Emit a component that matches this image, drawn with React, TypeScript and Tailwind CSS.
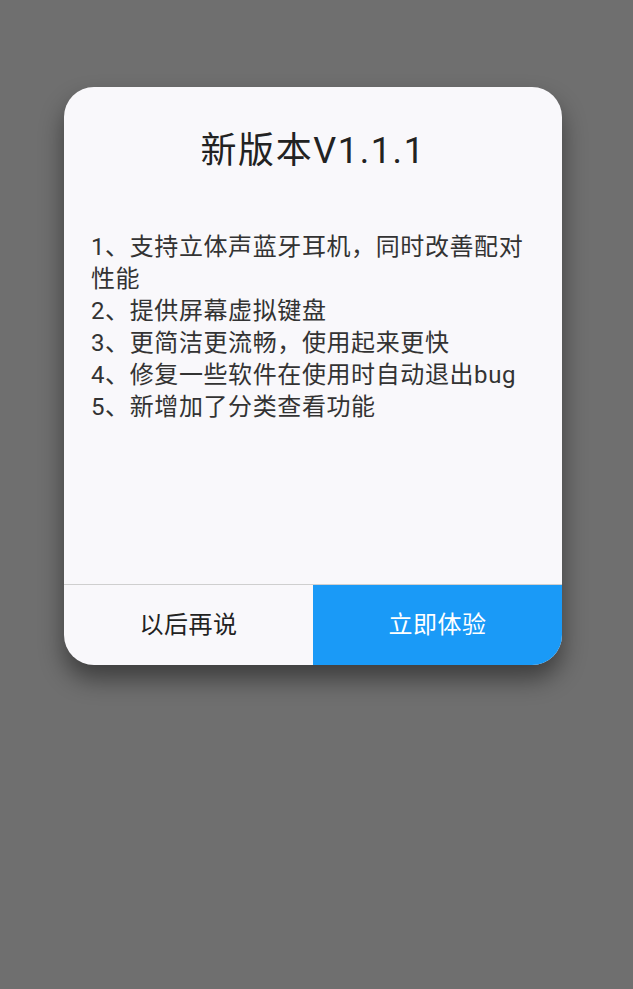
const items = [
  '1、支持立体声蓝牙耳机，同时改善配对性能',
  '2、提供屏幕虚拟键盘',
  '3、更简洁更流畅，使用起来更快',
  '4、修复一些软件在使用时自动退出bug',
  '5、新增加了分类查看功能',
];

export default function App() {
  return (
    <div
      className="min-h-screen bg-[#6f6f6f] pl-[64px] pt-[87px]"
      style={{ fontFamily: 'Roboto, "Noto Sans CJK SC", sans-serif' }}
    >
      <div className="flex h-[578px] w-[498px] flex-col overflow-hidden rounded-[30px] bg-[#f9f8fb] shadow-[0_14px_24px_rgba(0,0,0,0.45)]">
        <h1 className="pt-[42px] text-center text-[36px] leading-[44px] font-normal tracking-[1.6px] text-[#222]">
          新版本V1.1.1
        </h1>
        <div className="mt-[58px] flex-1 px-[27px] text-[24px] leading-[32px] tracking-[0.6px] text-[#333]">
          {items.map((t) => (
            <p key={t}>{t}</p>
          ))}
        </div>
        <div className="flex h-[81px] border-t border-[#cfcfcf]">
          <button className="flex-1 text-[24px] tracking-[0.5px] text-[#222]">以后再说</button>
          <button className="flex-1 bg-[#1a9af7] text-[24px] tracking-[0.5px] text-white">立即体验</button>
        </div>
      </div>
    </div>
  );
}
